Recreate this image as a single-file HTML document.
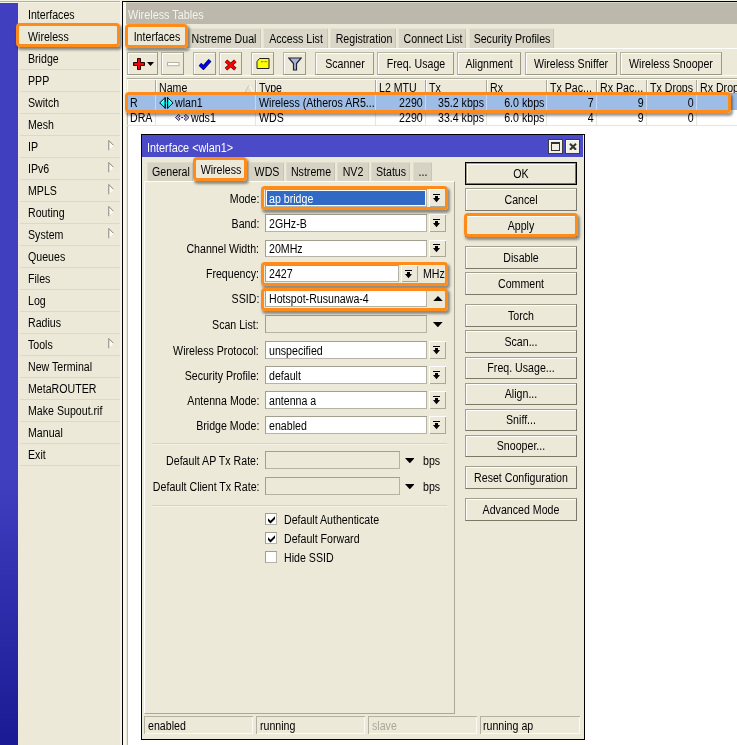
<!DOCTYPE html>
<html><head><meta charset="utf-8"><title>WinBox - Interface wlan1</title>
<style>
html,body{margin:0;padding:0;background:#fff;}
body{width:737px;height:745px;position:relative;overflow:hidden;font-family:"Liberation Sans",sans-serif;}
#root{position:absolute;left:0;top:0;width:737px;height:745px;overflow:hidden;will-change:transform}
#root div,#root svg,#root span{position:absolute;}
.t{white-space:nowrap;line-height:16px;height:16px;display:block}
.t.c{text-align:center}
</style></head><body><div id="root">
<div style="left:0px;top:0px;width:737px;height:745px;background:#ece9d8"></div>
<div style="left:0px;top:0px;width:737px;height:1px;background:#f3f1e2"></div>
<div style="left:0px;top:1px;width:122px;height:1px;background:#b3b0a2"></div>
<div style="left:0px;top:2px;width:122px;height:1px;background:#f5f3e4"></div>
<div style="left:0px;top:3px;width:18px;height:742px;background:linear-gradient(#3f3fc0 0,#3f3fc0 64%,#1a1a94 100%)"></div>
<span class="t" style="left:28px;top:7.0px;color:#000;font-size:12px;transform:scaleX(0.885);transform-origin:0 50%;">Interfaces</span>
<div style="left:20px;top:25px;width:100px;height:1.3px;background:#dcd9c8"></div>
<span class="t" style="left:28px;top:29.0px;color:#000;font-size:12px;transform:scaleX(0.885);transform-origin:0 50%;">Wireless</span>
<div style="left:20px;top:47px;width:100px;height:1.3px;background:#dcd9c8"></div>
<span class="t" style="left:28px;top:51.0px;color:#000;font-size:12px;transform:scaleX(0.885);transform-origin:0 50%;">Bridge</span>
<div style="left:20px;top:69px;width:100px;height:1.3px;background:#dcd9c8"></div>
<span class="t" style="left:28px;top:73.0px;color:#000;font-size:12px;transform:scaleX(0.885);transform-origin:0 50%;">PPP</span>
<div style="left:20px;top:91px;width:100px;height:1.3px;background:#dcd9c8"></div>
<span class="t" style="left:28px;top:95.0px;color:#000;font-size:12px;transform:scaleX(0.885);transform-origin:0 50%;">Switch</span>
<div style="left:20px;top:113px;width:100px;height:1.3px;background:#dcd9c8"></div>
<span class="t" style="left:28px;top:117.0px;color:#000;font-size:12px;transform:scaleX(0.885);transform-origin:0 50%;">Mesh</span>
<div style="left:20px;top:135px;width:100px;height:1.3px;background:#dcd9c8"></div>
<span class="t" style="left:28px;top:139.0px;color:#000;font-size:12px;transform:scaleX(0.885);transform-origin:0 50%;">IP</span>
<div style="left:20px;top:157px;width:100px;height:1.3px;background:#dcd9c8"></div>
<svg style="left:108px;top:140px" width="7" height="11" viewBox="0 0 7 11"><path d="M0.8 0.5 L5.6 5.4 L0.8 10.3 Z" fill="#fdfcf8"/><path d="M0.8 10.2 L0.8 0.5 L5.4 5.2" fill="none" stroke="#858377" stroke-width="1"/></svg>
<span class="t" style="left:28px;top:161.0px;color:#000;font-size:12px;transform:scaleX(0.885);transform-origin:0 50%;">IPv6</span>
<div style="left:20px;top:179px;width:100px;height:1.3px;background:#dcd9c8"></div>
<svg style="left:108px;top:162px" width="7" height="11" viewBox="0 0 7 11"><path d="M0.8 0.5 L5.6 5.4 L0.8 10.3 Z" fill="#fdfcf8"/><path d="M0.8 10.2 L0.8 0.5 L5.4 5.2" fill="none" stroke="#858377" stroke-width="1"/></svg>
<span class="t" style="left:28px;top:183.0px;color:#000;font-size:12px;transform:scaleX(0.885);transform-origin:0 50%;">MPLS</span>
<div style="left:20px;top:201px;width:100px;height:1.3px;background:#dcd9c8"></div>
<svg style="left:108px;top:184px" width="7" height="11" viewBox="0 0 7 11"><path d="M0.8 0.5 L5.6 5.4 L0.8 10.3 Z" fill="#fdfcf8"/><path d="M0.8 10.2 L0.8 0.5 L5.4 5.2" fill="none" stroke="#858377" stroke-width="1"/></svg>
<span class="t" style="left:28px;top:205.0px;color:#000;font-size:12px;transform:scaleX(0.885);transform-origin:0 50%;">Routing</span>
<div style="left:20px;top:223px;width:100px;height:1.3px;background:#dcd9c8"></div>
<svg style="left:108px;top:206px" width="7" height="11" viewBox="0 0 7 11"><path d="M0.8 0.5 L5.6 5.4 L0.8 10.3 Z" fill="#fdfcf8"/><path d="M0.8 10.2 L0.8 0.5 L5.4 5.2" fill="none" stroke="#858377" stroke-width="1"/></svg>
<span class="t" style="left:28px;top:227.0px;color:#000;font-size:12px;transform:scaleX(0.885);transform-origin:0 50%;">System</span>
<div style="left:20px;top:245px;width:100px;height:1.3px;background:#dcd9c8"></div>
<svg style="left:108px;top:228px" width="7" height="11" viewBox="0 0 7 11"><path d="M0.8 0.5 L5.6 5.4 L0.8 10.3 Z" fill="#fdfcf8"/><path d="M0.8 10.2 L0.8 0.5 L5.4 5.2" fill="none" stroke="#858377" stroke-width="1"/></svg>
<span class="t" style="left:28px;top:249.0px;color:#000;font-size:12px;transform:scaleX(0.885);transform-origin:0 50%;">Queues</span>
<div style="left:20px;top:267px;width:100px;height:1.3px;background:#dcd9c8"></div>
<span class="t" style="left:28px;top:271.0px;color:#000;font-size:12px;transform:scaleX(0.885);transform-origin:0 50%;">Files</span>
<div style="left:20px;top:289px;width:100px;height:1.3px;background:#dcd9c8"></div>
<span class="t" style="left:28px;top:293.0px;color:#000;font-size:12px;transform:scaleX(0.885);transform-origin:0 50%;">Log</span>
<div style="left:20px;top:311px;width:100px;height:1.3px;background:#dcd9c8"></div>
<span class="t" style="left:28px;top:315.0px;color:#000;font-size:12px;transform:scaleX(0.885);transform-origin:0 50%;">Radius</span>
<div style="left:20px;top:333px;width:100px;height:1.3px;background:#dcd9c8"></div>
<span class="t" style="left:28px;top:337.0px;color:#000;font-size:12px;transform:scaleX(0.885);transform-origin:0 50%;">Tools</span>
<div style="left:20px;top:355px;width:100px;height:1.3px;background:#dcd9c8"></div>
<svg style="left:108px;top:338px" width="7" height="11" viewBox="0 0 7 11"><path d="M0.8 0.5 L5.6 5.4 L0.8 10.3 Z" fill="#fdfcf8"/><path d="M0.8 10.2 L0.8 0.5 L5.4 5.2" fill="none" stroke="#858377" stroke-width="1"/></svg>
<span class="t" style="left:28px;top:359.0px;color:#000;font-size:12px;transform:scaleX(0.885);transform-origin:0 50%;">New Terminal</span>
<div style="left:20px;top:377px;width:100px;height:1.3px;background:#dcd9c8"></div>
<span class="t" style="left:28px;top:381.0px;color:#000;font-size:12px;transform:scaleX(0.885);transform-origin:0 50%;">MetaROUTER</span>
<div style="left:20px;top:399px;width:100px;height:1.3px;background:#dcd9c8"></div>
<span class="t" style="left:28px;top:403.0px;color:#000;font-size:12px;transform:scaleX(0.885);transform-origin:0 50%;">Make Supout.rif</span>
<div style="left:20px;top:421px;width:100px;height:1.3px;background:#dcd9c8"></div>
<span class="t" style="left:28px;top:425.0px;color:#000;font-size:12px;transform:scaleX(0.885);transform-origin:0 50%;">Manual</span>
<div style="left:20px;top:443px;width:100px;height:1.3px;background:#dcd9c8"></div>
<span class="t" style="left:28px;top:447.0px;color:#000;font-size:12px;transform:scaleX(0.885);transform-origin:0 50%;">Exit</span>
<div style="left:20px;top:465px;width:100px;height:1.3px;background:#dcd9c8"></div>
<div style="left:16px;top:23px;width:104px;height:24px;border:3px solid #ff8c1a;border-radius:4px;box-sizing:border-box;box-shadow:1.5px 2.5px 2.5px rgba(0,0,0,.4);z-index:5"></div>
<div style="left:120px;top:1px;width:2px;height:744px;background:#f4f2e7"></div>
<div style="left:122px;top:1px;width:615px;height:744px;background:#ece9d8;border-left:1px solid #000;border-top:1px solid #000;box-sizing:border-box"></div>
<div style="left:123px;top:2px;width:614px;height:21.6px;background:#bcb8ab"></div>
<div style="left:123px;top:2px;width:614px;height:1px;background:#d9d6c9"></div>
<div style="left:123px;top:2px;width:2.6px;height:743px;background:#f9f7ee;z-index:1"></div>
<span class="t" style="left:128px;top:7.0px;color:#f4f3ee;font-size:12.5px;transform:scaleX(0.866);transform-origin:0 50%;">Wireless Tables</span>
<div style="left:123px;top:48px;width:614px;height:1px;background:#ffffff"></div>
<div style="left:127px;top:27px;width:58px;height:22px;background:#ece9d8"></div>
<span class="t c" style="left:6.800000000000011px;width:300px;top:29.299999999999997px;color:#000;font-size:12px;transform:scaleX(0.885);transform-origin:50% 50%;">Interfaces</span>
<div style="left:186px;top:28px;width:75px;height:19.7px;background:#d9d6c7;box-shadow:inset 1px 1px 0 #e4e1d3, inset -1px 0 0 #c9c6b7"></div>
<span class="t c" style="left:74.1px;width:300px;top:31.0px;color:#000;font-size:12px;transform:scaleX(0.885);transform-origin:50% 50%;">Nstreme Dual</span>
<div style="left:263px;top:28px;width:64.60000000000002px;height:19.7px;background:#d9d6c7;box-shadow:inset 1px 1px 0 #e4e1d3, inset -1px 0 0 #c9c6b7"></div>
<span class="t c" style="left:145.90000000000003px;width:300px;top:31.0px;color:#000;font-size:12px;transform:scaleX(0.885);transform-origin:50% 50%;">Access List</span>
<div style="left:329.8px;top:28px;width:66.19999999999999px;height:19.7px;background:#d9d6c7;box-shadow:inset 1px 1px 0 #e4e1d3, inset -1px 0 0 #c9c6b7"></div>
<span class="t c" style="left:213.5px;width:300px;top:31.0px;color:#000;font-size:12px;transform:scaleX(0.885);transform-origin:50% 50%;">Registration</span>
<div style="left:398px;top:28px;width:68.30000000000001px;height:19.7px;background:#d9d6c7;box-shadow:inset 1px 1px 0 #e4e1d3, inset -1px 0 0 #c9c6b7"></div>
<span class="t c" style="left:282.75px;width:300px;top:31.0px;color:#000;font-size:12px;transform:scaleX(0.885);transform-origin:50% 50%;">Connect List</span>
<div style="left:468.6px;top:28px;width:85.10000000000002px;height:19.7px;background:#d9d6c7;box-shadow:inset 1px 1px 0 #e4e1d3, inset -1px 0 0 #c9c6b7"></div>
<span class="t c" style="left:361.75000000000006px;width:300px;top:31.0px;color:#000;font-size:12px;transform:scaleX(0.885);transform-origin:50% 50%;">Security Profiles</span>
<div style="left:125px;top:24px;width:62.5px;height:23.6px;border:3px solid #ff8c1a;border-radius:4px;box-sizing:border-box;box-shadow:1.5px 2.5px 2.5px rgba(0,0,0,.4);z-index:5"></div>
<div style="left:127.3px;top:52.3px;width:31px;height:22.3px;background:#ece9d8;border:1px solid;border-color:#b5b2a3 #9b988a #9b988a #b5b2a3;box-sizing:border-box;box-shadow:inset 1px 1px 0 #ffffff"></div>
<div style="left:161.3px;top:52.3px;width:23px;height:22.3px;background:#ece9d8;border:1px solid;border-color:#b5b2a3 #9b988a #9b988a #b5b2a3;box-sizing:border-box;box-shadow:inset 1px 1px 0 #ffffff"></div>
<div style="left:193.3px;top:52.3px;width:23px;height:22.3px;background:#ece9d8;border:1px solid;border-color:#b5b2a3 #9b988a #9b988a #b5b2a3;box-sizing:border-box;box-shadow:inset 1px 1px 0 #ffffff"></div>
<div style="left:219.3px;top:52.3px;width:23px;height:22.3px;background:#ece9d8;border:1px solid;border-color:#b5b2a3 #9b988a #9b988a #b5b2a3;box-sizing:border-box;box-shadow:inset 1px 1px 0 #ffffff"></div>
<div style="left:251.3px;top:52.3px;width:23px;height:22.3px;background:#ece9d8;border:1px solid;border-color:#b5b2a3 #9b988a #9b988a #b5b2a3;box-sizing:border-box;box-shadow:inset 1px 1px 0 #ffffff"></div>
<div style="left:283.3px;top:52.3px;width:23px;height:22.3px;background:#ece9d8;border:1px solid;border-color:#b5b2a3 #9b988a #9b988a #b5b2a3;box-sizing:border-box;box-shadow:inset 1px 1px 0 #ffffff"></div>
<div style="left:315px;top:52.3px;width:59px;height:22.3px;background:#ece9d8;border:1px solid;border-color:#b5b2a3 #9b988a #9b988a #b5b2a3;box-sizing:border-box;box-shadow:inset 1px 1px 0 #ffffff"></div>
<span class="t c" style="left:194.5px;width:300px;top:55.7px;color:#000;font-size:12px;transform:scaleX(0.885);transform-origin:50% 50%;">Scanner</span>
<div style="left:377px;top:52.3px;width:77px;height:22.3px;background:#ece9d8;border:1px solid;border-color:#b5b2a3 #9b988a #9b988a #b5b2a3;box-sizing:border-box;box-shadow:inset 1px 1px 0 #ffffff"></div>
<span class="t c" style="left:265.5px;width:300px;top:55.7px;color:#000;font-size:12px;transform:scaleX(0.885);transform-origin:50% 50%;">Freq. Usage</span>
<div style="left:457px;top:52.3px;width:64px;height:22.3px;background:#ece9d8;border:1px solid;border-color:#b5b2a3 #9b988a #9b988a #b5b2a3;box-sizing:border-box;box-shadow:inset 1px 1px 0 #ffffff"></div>
<span class="t c" style="left:339.0px;width:300px;top:55.7px;color:#000;font-size:12px;transform:scaleX(0.885);transform-origin:50% 50%;">Alignment</span>
<div style="left:525px;top:52.3px;width:92px;height:22.3px;background:#ece9d8;border:1px solid;border-color:#b5b2a3 #9b988a #9b988a #b5b2a3;box-sizing:border-box;box-shadow:inset 1px 1px 0 #ffffff"></div>
<span class="t c" style="left:421.0px;width:300px;top:55.7px;color:#000;font-size:12px;transform:scaleX(0.885);transform-origin:50% 50%;">Wireless Sniffer</span>
<div style="left:620px;top:52.3px;width:102px;height:22.3px;background:#ece9d8;border:1px solid;border-color:#b5b2a3 #9b988a #9b988a #b5b2a3;box-sizing:border-box;box-shadow:inset 1px 1px 0 #ffffff"></div>
<span class="t c" style="left:521.0px;width:300px;top:55.7px;color:#000;font-size:12px;transform:scaleX(0.885);transform-origin:50% 50%;">Wireless Snooper</span>
<svg style="left:133px;top:58px" width="22" height="13" viewBox="0 0 22 13"><path d="M4.5 0.5h3v4h4v3h-4v4h-3v-4h-4v-3h4z" fill="#f00" stroke="#200" stroke-width="1"/><path d="M14 4h7l-3.5 4z" fill="#000"/></svg>
<svg style="left:167px;top:62px" width="13" height="5" viewBox="0 0 13 5"><rect x="0.5" y="0.5" width="11.5" height="3.2" fill="#fff" stroke="#b5b2a2"/></svg>
<svg style="left:198px;top:58px" width="14" height="12" viewBox="0 0 14 12"><path d="M2 6.3 L5.4 9.6 L12 2.3" fill="none" stroke="#003" stroke-width="3.8"/><path d="M2 6.3 L5.4 9.6 L12 2.3" fill="none" stroke="#00f" stroke-width="2.6"/></svg>
<svg style="left:224px;top:58.5px" width="13" height="12" viewBox="0 0 13 12"><path d="M2 1.8 L11.3 10.2 M11.3 1.8 L2 10.2" fill="none" stroke="#500" stroke-width="3.6"/><path d="M2 1.8 L11.3 10.2 M11.3 1.8 L2 10.2" fill="none" stroke="#f00" stroke-width="2.4"/></svg>
<svg style="left:256px;top:58px" width="14" height="12" viewBox="0 0 14 12"><path d="M3.5 0.5h9.5v10h-12v-7z" fill="#ff0" stroke="#222" stroke-width="1"/><path d="M5 3.6h7" stroke="#8a8a70" stroke-width="1.1" stroke-dasharray="2.4 1"/></svg>
<svg style="left:288px;top:57px" width="14" height="14" viewBox="0 0 14 14"><path d="M0.8 1h12.4l-4.7 5.5v6.5h-3v-6.5z" fill="#a8b4d8" stroke="#223" stroke-width="1.2"/></svg>
<div style="left:127px;top:78px;width:610px;height:667px;background:#fff;border-left:1px solid #b9b6a7;box-sizing:border-box"></div>
<div style="left:127px;top:78px;width:610px;height:1px;background:#b0ad9e"></div>
<div style="left:125.6px;top:75px;width:612px;height:1px;background:#fdfcf7"></div>
<div style="left:127px;top:79px;width:29px;height:15px;background:#ece9d8;box-shadow:inset 1px 1px 0 #ffffff, inset -1px 0 0 #aca899;"></div>
<div style="left:156px;top:79px;width:100px;height:15px;background:#ece9d8;box-shadow:inset 1px 1px 0 #ffffff, inset -1px 0 0 #aca899;"></div>
<span class="t" style="left:159px;top:79.6px;color:#000;font-size:12px;transform:scaleX(0.885);transform-origin:0 50%;">Name</span>
<div style="left:256px;top:79px;width:120px;height:15px;background:#ece9d8;box-shadow:inset 1px 1px 0 #ffffff, inset -1px 0 0 #aca899;"></div>
<span class="t" style="left:259px;top:79.6px;color:#000;font-size:12px;transform:scaleX(0.885);transform-origin:0 50%;">Type</span>
<div style="left:376px;top:79px;width:50px;height:15px;background:#ece9d8;box-shadow:inset 1px 1px 0 #ffffff, inset -1px 0 0 #aca899;"></div>
<span class="t" style="left:379px;top:79.6px;color:#000;font-size:12px;transform:scaleX(0.885);transform-origin:0 50%;">L2 MTU</span>
<div style="left:426px;top:79px;width:61px;height:15px;background:#ece9d8;box-shadow:inset 1px 1px 0 #ffffff, inset -1px 0 0 #aca899;"></div>
<span class="t" style="left:429px;top:79.6px;color:#000;font-size:12px;transform:scaleX(0.885);transform-origin:0 50%;">Tx</span>
<div style="left:487px;top:79px;width:60px;height:15px;background:#ece9d8;box-shadow:inset 1px 1px 0 #ffffff, inset -1px 0 0 #aca899;"></div>
<span class="t" style="left:490px;top:79.6px;color:#000;font-size:12px;transform:scaleX(0.885);transform-origin:0 50%;">Rx</span>
<div style="left:547px;top:79px;width:50px;height:15px;background:#ece9d8;box-shadow:inset 1px 1px 0 #ffffff, inset -1px 0 0 #aca899;"></div>
<span class="t" style="left:550px;top:79.6px;color:#000;font-size:12px;transform:scaleX(0.885);transform-origin:0 50%;">Tx Pac...</span>
<div style="left:597px;top:79px;width:50px;height:15px;background:#ece9d8;box-shadow:inset 1px 1px 0 #ffffff, inset -1px 0 0 #aca899;"></div>
<span class="t" style="left:600px;top:79.6px;color:#000;font-size:12px;transform:scaleX(0.885);transform-origin:0 50%;">Rx Pac...</span>
<div style="left:647px;top:79px;width:50px;height:15px;background:#ece9d8;box-shadow:inset 1px 1px 0 #ffffff, inset -1px 0 0 #aca899;"></div>
<span class="t" style="left:650px;top:79.6px;color:#000;font-size:12px;transform:scaleX(0.885);transform-origin:0 50%;">Tx Drops</span>
<div style="left:697px;top:79px;width:43px;height:15px;background:#ece9d8;box-shadow:inset 1px 1px 0 #ffffff, inset -1px 0 0 #aca899;"></div>
<span class="t" style="left:700px;top:79.6px;color:#000;font-size:12px;transform:scaleX(0.885);transform-origin:0 50%;">Rx Drop</span>
<div style="left:127px;top:93px;width:610px;height:1px;background:#aca899"></div>
<svg style="left:244px;top:84px" width="10" height="9" viewBox="0 0 10 9"><path d="M5 1 L1 8.5 L9 8.5 Z" fill="#e4e1d2" stroke="#fff" stroke-width="1"/><path d="M5 1 L1 8.5" stroke="#c0bdae" stroke-width="1"/></svg>
<div style="left:127px;top:94px;width:610px;height:16px;background:#9ebde6"></div>
<div style="left:155px;top:94px;width:1px;height:16px;background:#c4d6f0"></div>
<div style="left:155px;top:110px;width:1px;height:15px;background:#e8e6da"></div>
<div style="left:255px;top:94px;width:1px;height:16px;background:#c4d6f0"></div>
<div style="left:255px;top:110px;width:1px;height:15px;background:#e8e6da"></div>
<div style="left:375px;top:94px;width:1px;height:16px;background:#c4d6f0"></div>
<div style="left:375px;top:110px;width:1px;height:15px;background:#e8e6da"></div>
<div style="left:425px;top:94px;width:1px;height:16px;background:#c4d6f0"></div>
<div style="left:425px;top:110px;width:1px;height:15px;background:#e8e6da"></div>
<div style="left:486px;top:94px;width:1px;height:16px;background:#c4d6f0"></div>
<div style="left:486px;top:110px;width:1px;height:15px;background:#e8e6da"></div>
<div style="left:546px;top:94px;width:1px;height:16px;background:#c4d6f0"></div>
<div style="left:546px;top:110px;width:1px;height:15px;background:#e8e6da"></div>
<div style="left:596px;top:94px;width:1px;height:16px;background:#c4d6f0"></div>
<div style="left:596px;top:110px;width:1px;height:15px;background:#e8e6da"></div>
<div style="left:646px;top:94px;width:1px;height:16px;background:#c4d6f0"></div>
<div style="left:646px;top:110px;width:1px;height:15px;background:#e8e6da"></div>
<div style="left:696px;top:94px;width:1px;height:16px;background:#c4d6f0"></div>
<div style="left:696px;top:110px;width:1px;height:15px;background:#e8e6da"></div>
<div style="left:127px;top:125px;width:610px;height:1px;background:#e8e6da"></div>
<span class="t" style="left:130px;top:95.0px;color:#000;font-size:12px;transform:scaleX(0.885);transform-origin:0 50%;">R</span>
<span class="t" style="left:175px;top:95.0px;color:#000;font-size:12px;transform:scaleX(0.885);transform-origin:0 50%;">wlan1</span>
<span class="t" style="left:259px;top:95.0px;color:#000;font-size:12px;transform:scaleX(0.885);transform-origin:0 50%;">Wireless (Atheros AR5...</span>
<span class="t" style="right:314px;top:95.0px;color:#000;font-size:12px;transform:scaleX(0.885);transform-origin:100% 50%;">2290</span>
<span class="t" style="right:253px;top:95.0px;color:#000;font-size:12px;transform:scaleX(0.885);transform-origin:100% 50%;">35.2 kbps</span>
<span class="t" style="right:193px;top:95.0px;color:#000;font-size:12px;transform:scaleX(0.885);transform-origin:100% 50%;">6.0 kbps</span>
<span class="t" style="right:143px;top:95.0px;color:#000;font-size:12px;transform:scaleX(0.885);transform-origin:100% 50%;">7</span>
<span class="t" style="right:93px;top:95.0px;color:#000;font-size:12px;transform:scaleX(0.885);transform-origin:100% 50%;">9</span>
<span class="t" style="right:43px;top:95.0px;color:#000;font-size:12px;transform:scaleX(0.885);transform-origin:100% 50%;">0</span>
<span class="t" style="left:130px;top:109.5px;color:#000;font-size:12px;transform:scaleX(0.885);transform-origin:0 50%;">DRA</span>
<span class="t" style="left:191px;top:109.5px;color:#000;font-size:12px;transform:scaleX(0.885);transform-origin:0 50%;">wds1</span>
<span class="t" style="left:259px;top:109.5px;color:#000;font-size:12px;transform:scaleX(0.885);transform-origin:0 50%;">WDS</span>
<span class="t" style="right:314px;top:109.5px;color:#000;font-size:12px;transform:scaleX(0.885);transform-origin:100% 50%;">2290</span>
<span class="t" style="right:253px;top:109.5px;color:#000;font-size:12px;transform:scaleX(0.885);transform-origin:100% 50%;">33.4 kbps</span>
<span class="t" style="right:193px;top:109.5px;color:#000;font-size:12px;transform:scaleX(0.885);transform-origin:100% 50%;">6.0 kbps</span>
<span class="t" style="right:143px;top:109.5px;color:#000;font-size:12px;transform:scaleX(0.885);transform-origin:100% 50%;">4</span>
<span class="t" style="right:93px;top:109.5px;color:#000;font-size:12px;transform:scaleX(0.885);transform-origin:100% 50%;">9</span>
<span class="t" style="right:43px;top:109.5px;color:#000;font-size:12px;transform:scaleX(0.885);transform-origin:100% 50%;">0</span>
<svg style="left:158.5px;top:96.6px" width="15" height="12" viewBox="0 0 15 12"><rect x="3" y="4.8" width="9" height="2.3" fill="#0ff"/><path d="M0.7 5.9 L6.2 0.6 L6.2 11.2 Z M14.1 5.9 L8.6 0.6 L8.6 11.2 Z" fill="#2ff" stroke="#011" stroke-width="1" stroke-linejoin="miter"/><rect x="4" y="4.9" width="7" height="2" fill="#0ff"/><path d="M6.2 0.3v11.3M8.6 0.3v11.3" stroke="#011" stroke-width="1"/><path d="M2.6 5.4 L5 3.2 M12.2 5.4 L9.8 3.2" stroke="#dff" stroke-width=".8"/></svg>
<svg style="left:175px;top:114px" width="15" height="8" viewBox="0 0 15 8"><path d="M0.4 3.5 L3.6 0.4 L5.2 1.9 L3.6 3.5 L5.2 5.1 L3.6 6.6 Z M14 3.5 L10.8 0.4 L9.2 1.9 L10.8 3.5 L9.2 5.1 L10.8 6.6 Z" fill="#c0b0ff" stroke="#223" stroke-width=".9"/><path d="M6.2 3.5h2" stroke="#223" stroke-width="1.2"/></svg>
<div style="left:125px;top:92px;width:606px;height:21px;border:3px solid #ff8c1a;border-radius:4px;box-sizing:border-box;box-shadow:1.5px 2.5px 2.5px rgba(0,0,0,.4);z-index:5"></div>
<div style="left:141px;top:134px;width:444px;height:606.4px;background:#ece9d8;border:1px solid #000;border-bottom-width:1.5px;box-sizing:border-box"></div>
<div style="left:142px;top:135px;width:441px;height:21.7px;background:#4b4bc8"></div>
<span class="t" style="left:147px;top:140.0px;color:#fff;font-size:12.5px;transform:scaleX(0.866);transform-origin:0 50%;">Interface &lt;wlan1&gt;</span>
<div style="left:548.2px;top:139.2px;width:14.6px;height:14.6px;background:#f3f0e4;border:1px solid #3c3c3c;box-sizing:border-box;box-shadow:inset 1px 1px 0 #fff"></div>
<div style="left:565.2px;top:139.2px;width:14.6px;height:14.6px;background:#f3f0e4;border:1px solid #3c3c3c;box-sizing:border-box;box-shadow:inset 1px 1px 0 #fff"></div>
<div style="left:551.2px;top:142.2px;width:8.8px;height:8.6px;border:1px solid #333;border-top-width:2px;box-sizing:border-box"></div>
<svg style="left:568.5px;top:142.7px" width="8" height="7.6" viewBox="0 0 8 7.6"><path d="M1 0.8 L7 6.8 M7 0.8 L1 6.8" stroke="#333" stroke-width="2"/></svg>
<div style="left:144px;top:181px;width:311px;height:533px;background:#ece9d8;border-top:1px solid #ffffff;border-left:1px solid #ffffff;border-right:1px solid #aca899;border-bottom:1px solid #aca899;box-sizing:border-box"></div>
<div style="left:146.8px;top:162.2px;width:46.19999999999999px;height:18.8px;background:#d6d3c4;box-shadow:inset 1px 1px 0 #dfdccd, inset -1px 0 0 #c8c5b6"></div>
<span class="t c" style="left:21.099999999999994px;width:300px;top:163.7px;color:#000;font-size:12px;transform:scaleX(0.885);transform-origin:50% 50%;">General</span>
<div style="left:194px;top:159px;width:53px;height:23px;background:#ece9d8"></div>
<span class="t c" style="left:70.5px;width:300px;top:162.0px;color:#000;font-size:12px;transform:scaleX(0.885);transform-origin:50% 50%;">Wireless</span>
<div style="left:249.5px;top:162.2px;width:34.0px;height:18.8px;background:#d6d3c4;box-shadow:inset 1px 1px 0 #dfdccd, inset -1px 0 0 #c8c5b6"></div>
<span class="t c" style="left:116.80000000000001px;width:300px;top:163.7px;color:#000;font-size:12px;transform:scaleX(0.885);transform-origin:50% 50%;">WDS</span>
<div style="left:286px;top:162.2px;width:49px;height:18.8px;background:#d6d3c4;box-shadow:inset 1px 1px 0 #dfdccd, inset -1px 0 0 #c8c5b6"></div>
<span class="t c" style="left:160.8px;width:300px;top:163.7px;color:#000;font-size:12px;transform:scaleX(0.885);transform-origin:50% 50%;">Nstreme</span>
<div style="left:337.2px;top:162.2px;width:31.80000000000001px;height:18.8px;background:#d6d3c4;box-shadow:inset 1px 1px 0 #dfdccd, inset -1px 0 0 #c8c5b6"></div>
<span class="t c" style="left:203.40000000000003px;width:300px;top:163.7px;color:#000;font-size:12px;transform:scaleX(0.885);transform-origin:50% 50%;">NV2</span>
<div style="left:370.8px;top:162.2px;width:39.599999999999966px;height:18.8px;background:#d6d3c4;box-shadow:inset 1px 1px 0 #dfdccd, inset -1px 0 0 #c8c5b6"></div>
<span class="t c" style="left:240.90000000000003px;width:300px;top:163.7px;color:#000;font-size:12px;transform:scaleX(0.885);transform-origin:50% 50%;">Status</span>
<div style="left:412.6px;top:162.2px;width:19.5px;height:18.8px;background:#d6d3c4;box-shadow:inset 1px 1px 0 #dfdccd, inset -1px 0 0 #c8c5b6"></div>
<span class="t c" style="left:272.65000000000003px;width:300px;top:163.7px;color:#000;font-size:12px;transform:scaleX(0.885);transform-origin:50% 50%;">...</span>
<div style="left:193.2px;top:157px;width:54.2px;height:24px;border:3px solid #ff8c1a;border-radius:4px;box-sizing:border-box;box-shadow:1.5px 2.5px 2.5px rgba(0,0,0,.4);z-index:5"></div>
<span class="t" style="right:478px;top:190.8px;color:#000;font-size:12px;transform:scaleX(0.885);transform-origin:100% 50%;">Mode:</span>
<div style="left:265px;top:189.25px;width:162px;height:17.5px;background:#ffffff;box-shadow:inset 1px 1px 0 #a29f91, inset -1px -1px 0 #b6b3a4;"></div>
<div style="left:267px;top:191.25px;width:158px;height:13.5px;background:#316ac5"></div>
<span class="t" style="left:268.7px;top:190.6px;color:#fff;font-size:12px;transform:scaleX(0.885);transform-origin:0 50%;">ap bridge</span>
<div style="left:428.5px;top:189.25px;width:17.3px;height:17.5px;background:#ece9d8;box-shadow:inset 1px 1px 0 #ffffff, inset -1px -1px 0 #aca899;"></div>
<svg style="left:433.0px;top:194.05px" width="7" height="9" viewBox="0 0 7 9"><rect x="0" y="0" width="7" height="1" fill="#000"/><rect x="2" y="2" width="3" height="2.5" fill="#000"/><path d="M0 4h7l-3.5 4.2z" fill="#000"/></svg>
<span class="t" style="right:478px;top:215.8px;color:#000;font-size:12px;transform:scaleX(0.885);transform-origin:100% 50%;">Band:</span>
<div style="left:265px;top:214.25px;width:162px;height:17.5px;background:#ffffff;box-shadow:inset 1px 1px 0 #a29f91, inset -1px -1px 0 #b6b3a4;"></div>
<span class="t" style="left:268.7px;top:215.6px;color:#000;font-size:12px;transform:scaleX(0.885);transform-origin:0 50%;">2GHz-B</span>
<div style="left:428.5px;top:214.25px;width:17.3px;height:17.5px;background:#ece9d8;box-shadow:inset 1px 1px 0 #ffffff, inset -1px -1px 0 #aca899;"></div>
<svg style="left:433.0px;top:219.05px" width="7" height="9" viewBox="0 0 7 9"><rect x="0" y="0" width="7" height="1" fill="#000"/><rect x="2" y="2" width="3" height="2.5" fill="#000"/><path d="M0 4h7l-3.5 4.2z" fill="#000"/></svg>
<span class="t" style="right:478px;top:241.10000000000002px;color:#000;font-size:12px;transform:scaleX(0.885);transform-origin:100% 50%;">Channel Width:</span>
<div style="left:265px;top:239.55px;width:162px;height:17.5px;background:#ffffff;box-shadow:inset 1px 1px 0 #a29f91, inset -1px -1px 0 #b6b3a4;"></div>
<span class="t" style="left:268.7px;top:240.9px;color:#000;font-size:12px;transform:scaleX(0.885);transform-origin:0 50%;">20MHz</span>
<div style="left:428.5px;top:239.55px;width:17.3px;height:17.5px;background:#ece9d8;box-shadow:inset 1px 1px 0 #ffffff, inset -1px -1px 0 #aca899;"></div>
<svg style="left:433.0px;top:244.35000000000002px" width="7" height="9" viewBox="0 0 7 9"><rect x="0" y="0" width="7" height="1" fill="#000"/><rect x="2" y="2" width="3" height="2.5" fill="#000"/><path d="M0 4h7l-3.5 4.2z" fill="#000"/></svg>
<span class="t" style="right:478px;top:266.3px;color:#000;font-size:12px;transform:scaleX(0.885);transform-origin:100% 50%;">Frequency:</span>
<div style="left:265px;top:264.75px;width:134px;height:17.5px;background:#ffffff;box-shadow:inset 1px 1px 0 #a29f91, inset -1px -1px 0 #b6b3a4;"></div>
<span class="t" style="left:268.7px;top:266.1px;color:#000;font-size:12px;transform:scaleX(0.885);transform-origin:0 50%;">2427</span>
<div style="left:400.5px;top:264.75px;width:17.3px;height:17.5px;background:#ece9d8;box-shadow:inset 1px 1px 0 #ffffff, inset -1px -1px 0 #aca899;"></div>
<svg style="left:405.0px;top:269.55px" width="7" height="9" viewBox="0 0 7 9"><rect x="0" y="0" width="7" height="1" fill="#000"/><rect x="2" y="2" width="3" height="2.5" fill="#000"/><path d="M0 4h7l-3.5 4.2z" fill="#000"/></svg>
<span class="t" style="left:422.5px;top:266.1px;color:#000;font-size:12px;transform:scaleX(0.885);transform-origin:0 50%;">MHz</span>
<span class="t" style="right:478px;top:291.3px;color:#000;font-size:12px;transform:scaleX(0.885);transform-origin:100% 50%;">SSID:</span>
<div style="left:265px;top:289.75px;width:162px;height:17.5px;background:#ffffff;box-shadow:inset 1px 1px 0 #a29f91, inset -1px -1px 0 #b6b3a4;"></div>
<span class="t" style="left:268.7px;top:291.1px;color:#000;font-size:12px;transform:scaleX(0.885);transform-origin:0 50%;">Hotspot-Rusunawa-4</span>
<svg style="left:432.5px;top:296.0px" width="10" height="5.3" viewBox="0 0 10 5.3"><path d="M0 5.3h10l-5-5.3z" fill="#000"/></svg>
<span class="t" style="right:478px;top:316.8px;color:#000;font-size:12px;transform:scaleX(0.885);transform-origin:100% 50%;">Scan List:</span>
<div style="left:265px;top:315.25px;width:162px;height:17.5px;background:#ece9d8;box-shadow:inset 1px 1px 0 #a29f91, inset -1px -1px 0 #b6b3a4;"></div>
<svg style="left:433px;top:322px" width="9.6" height="5.3" viewBox="0 0 9.6 5.3"><path d="M0 0h9.6l-4.8 5.3z" fill="#000"/></svg>
<span class="t" style="right:478px;top:342.8px;color:#000;font-size:12px;transform:scaleX(0.885);transform-origin:100% 50%;">Wireless Protocol:</span>
<div style="left:265px;top:341.25px;width:162px;height:17.5px;background:#ffffff;box-shadow:inset 1px 1px 0 #a29f91, inset -1px -1px 0 #b6b3a4;"></div>
<span class="t" style="left:268.7px;top:342.6px;color:#000;font-size:12px;transform:scaleX(0.885);transform-origin:0 50%;">unspecified</span>
<div style="left:428.5px;top:341.25px;width:17.3px;height:17.5px;background:#ece9d8;box-shadow:inset 1px 1px 0 #ffffff, inset -1px -1px 0 #aca899;"></div>
<svg style="left:433.0px;top:346.05px" width="7" height="9" viewBox="0 0 7 9"><rect x="0" y="0" width="7" height="1" fill="#000"/><rect x="2" y="2" width="3" height="2.5" fill="#000"/><path d="M0 4h7l-3.5 4.2z" fill="#000"/></svg>
<span class="t" style="right:478px;top:367.8px;color:#000;font-size:12px;transform:scaleX(0.885);transform-origin:100% 50%;">Security Profile:</span>
<div style="left:265px;top:366.25px;width:162px;height:17.5px;background:#ffffff;box-shadow:inset 1px 1px 0 #a29f91, inset -1px -1px 0 #b6b3a4;"></div>
<span class="t" style="left:268.7px;top:367.6px;color:#000;font-size:12px;transform:scaleX(0.885);transform-origin:0 50%;">default</span>
<div style="left:428.5px;top:366.25px;width:17.3px;height:17.5px;background:#ece9d8;box-shadow:inset 1px 1px 0 #ffffff, inset -1px -1px 0 #aca899;"></div>
<svg style="left:433.0px;top:371.05px" width="7" height="9" viewBox="0 0 7 9"><rect x="0" y="0" width="7" height="1" fill="#000"/><rect x="2" y="2" width="3" height="2.5" fill="#000"/><path d="M0 4h7l-3.5 4.2z" fill="#000"/></svg>
<span class="t" style="right:478px;top:392.8px;color:#000;font-size:12px;transform:scaleX(0.885);transform-origin:100% 50%;">Antenna Mode:</span>
<div style="left:265px;top:391.25px;width:162px;height:17.5px;background:#ffffff;box-shadow:inset 1px 1px 0 #a29f91, inset -1px -1px 0 #b6b3a4;"></div>
<span class="t" style="left:268.7px;top:392.6px;color:#000;font-size:12px;transform:scaleX(0.885);transform-origin:0 50%;">antenna a</span>
<div style="left:428.5px;top:391.25px;width:17.3px;height:17.5px;background:#ece9d8;box-shadow:inset 1px 1px 0 #ffffff, inset -1px -1px 0 #aca899;"></div>
<svg style="left:433.0px;top:396.05px" width="7" height="9" viewBox="0 0 7 9"><rect x="0" y="0" width="7" height="1" fill="#000"/><rect x="2" y="2" width="3" height="2.5" fill="#000"/><path d="M0 4h7l-3.5 4.2z" fill="#000"/></svg>
<span class="t" style="right:478px;top:417.8px;color:#000;font-size:12px;transform:scaleX(0.885);transform-origin:100% 50%;">Bridge Mode:</span>
<div style="left:265px;top:416.25px;width:162px;height:17.5px;background:#ffffff;box-shadow:inset 1px 1px 0 #a29f91, inset -1px -1px 0 #b6b3a4;"></div>
<span class="t" style="left:268.7px;top:417.6px;color:#000;font-size:12px;transform:scaleX(0.885);transform-origin:0 50%;">enabled</span>
<div style="left:428.5px;top:416.25px;width:17.3px;height:17.5px;background:#ece9d8;box-shadow:inset 1px 1px 0 #ffffff, inset -1px -1px 0 #aca899;"></div>
<svg style="left:433.0px;top:421.05px" width="7" height="9" viewBox="0 0 7 9"><rect x="0" y="0" width="7" height="1" fill="#000"/><rect x="2" y="2" width="3" height="2.5" fill="#000"/><path d="M0 4h7l-3.5 4.2z" fill="#000"/></svg>
<span class="t" style="right:478px;top:452.8px;color:#000;font-size:12px;transform:scaleX(0.885);transform-origin:100% 50%;">Default AP Tx Rate:</span>
<div style="left:265px;top:450.95px;width:135px;height:18px;background:#ece9d8;box-shadow:inset 1px 1px 0 #a29f91, inset -1px -1px 0 #b6b3a4;"></div>
<svg style="left:404.5px;top:457.8px" width="9.6" height="5.3" viewBox="0 0 9.6 5.3"><path d="M0 0h9.6l-4.8 5.3z" fill="#000"/></svg>
<span class="t" style="left:422.5px;top:452.6px;color:#000;font-size:12px;transform:scaleX(0.885);transform-origin:0 50%;">bps</span>
<span class="t" style="right:478px;top:478.8px;color:#000;font-size:12px;transform:scaleX(0.885);transform-origin:100% 50%;">Default Client Tx Rate:</span>
<div style="left:265px;top:476.95px;width:135px;height:18px;background:#ece9d8;box-shadow:inset 1px 1px 0 #a29f91, inset -1px -1px 0 #b6b3a4;"></div>
<svg style="left:404.5px;top:483.8px" width="9.6" height="5.3" viewBox="0 0 9.6 5.3"><path d="M0 0h9.6l-4.8 5.3z" fill="#000"/></svg>
<span class="t" style="left:422.5px;top:478.6px;color:#000;font-size:12px;transform:scaleX(0.885);transform-origin:0 50%;">bps</span>
<div style="left:152px;top:443px;width:295px;height:1px;background:#d6d3c4"></div>
<div style="left:152px;top:444px;width:295px;height:1px;background:#f4f2e8"></div>
<div style="left:152px;top:505px;width:295px;height:1px;background:#d6d3c4"></div>
<div style="left:152px;top:506px;width:295px;height:1px;background:#f4f2e8"></div>
<div style="left:265px;top:513px;width:12.3px;height:12.3px;background:#ffffff;box-shadow:inset 1px 1px 0 #a29f91, inset -1px -1px 0 #b6b3a4;"></div>
<svg style="left:267.2px;top:514.7px" width="9" height="9" viewBox="0 0 9 9"><path d="M1 3.2 L3.5 5.7 L8 1.2 L8 4 L3.5 8.5 L1 6 Z" fill="#000"/></svg>
<span class="t" style="left:283.5px;top:511.70000000000005px;color:#000;font-size:12px;transform:scaleX(0.885);transform-origin:0 50%;">Default Authenticate</span>
<div style="left:265px;top:532px;width:12.3px;height:12.3px;background:#ffffff;box-shadow:inset 1px 1px 0 #a29f91, inset -1px -1px 0 #b6b3a4;"></div>
<svg style="left:267.2px;top:533.7px" width="9" height="9" viewBox="0 0 9 9"><path d="M1 3.2 L3.5 5.7 L8 1.2 L8 4 L3.5 8.5 L1 6 Z" fill="#000"/></svg>
<span class="t" style="left:283.5px;top:530.7px;color:#000;font-size:12px;transform:scaleX(0.885);transform-origin:0 50%;">Default Forward</span>
<div style="left:265px;top:551px;width:12.3px;height:12.3px;background:#ffffff;box-shadow:inset 1px 1px 0 #a29f91, inset -1px -1px 0 #b6b3a4;"></div>
<span class="t" style="left:283.5px;top:549.7px;color:#000;font-size:12px;transform:scaleX(0.885);transform-origin:0 50%;">Hide SSID</span>
<div style="left:261px;top:186px;width:187px;height:24px;border:3px solid #ff8c1a;border-radius:4px;box-sizing:border-box;box-shadow:1.5px 2.5px 2.5px rgba(0,0,0,.4);z-index:5"></div>
<div style="left:261px;top:262px;width:187px;height:23.5px;border:3px solid #ff8c1a;border-radius:4px;box-sizing:border-box;box-shadow:1.5px 2.5px 2.5px rgba(0,0,0,.4);z-index:5"></div>
<div style="left:261px;top:287.5px;width:187px;height:23px;border:3px solid #ff8c1a;border-radius:4px;box-sizing:border-box;box-shadow:1.5px 2.5px 2.5px rgba(0,0,0,.4);z-index:5"></div>
<div style="left:465px;top:162.2px;width:112.2px;height:22.6px;border:1px solid #000;box-sizing:border-box"></div>
<div style="left:466px;top:163.2px;width:110.2px;height:20.6px;background:#ece9d8;border:1px solid;border-color:#a19e8e #7a7869 #7a7869 #a19e8e;box-sizing:border-box;box-shadow:inset 1px 1px 0 #ffffff"></div>
<span class="t c" style="left:371px;width:300px;top:165.89999999999998px;color:#000;font-size:12px;transform:scaleX(0.885);transform-origin:50% 50%;">OK</span>
<div style="left:465px;top:188.4px;width:112.2px;height:22.6px;background:#ece9d8;border:1px solid;border-color:#a19e8e #7a7869 #7a7869 #a19e8e;box-sizing:border-box;box-shadow:inset 1px 1px 0 #ffffff"></div>
<span class="t c" style="left:371px;width:300px;top:192.1px;color:#000;font-size:12px;transform:scaleX(0.885);transform-origin:50% 50%;">Cancel</span>
<div style="left:465px;top:214.6px;width:112.2px;height:22.6px;background:#ece9d8;border:1px solid;border-color:#a19e8e #7a7869 #7a7869 #a19e8e;box-sizing:border-box;box-shadow:inset 1px 1px 0 #ffffff"></div>
<span class="t c" style="left:371px;width:300px;top:218.29999999999998px;color:#000;font-size:12px;transform:scaleX(0.885);transform-origin:50% 50%;">Apply</span>
<div style="left:465px;top:246.1px;width:112.2px;height:22.6px;background:#ece9d8;border:1px solid;border-color:#a19e8e #7a7869 #7a7869 #a19e8e;box-sizing:border-box;box-shadow:inset 1px 1px 0 #ffffff"></div>
<span class="t c" style="left:371px;width:300px;top:249.8px;color:#000;font-size:12px;transform:scaleX(0.885);transform-origin:50% 50%;">Disable</span>
<div style="left:465px;top:272.3px;width:112.2px;height:22.6px;background:#ece9d8;border:1px solid;border-color:#a19e8e #7a7869 #7a7869 #a19e8e;box-sizing:border-box;box-shadow:inset 1px 1px 0 #ffffff"></div>
<span class="t c" style="left:371px;width:300px;top:276.0px;color:#000;font-size:12px;transform:scaleX(0.885);transform-origin:50% 50%;">Comment</span>
<div style="left:465px;top:304px;width:112.2px;height:22.6px;background:#ece9d8;border:1px solid;border-color:#a19e8e #7a7869 #7a7869 #a19e8e;box-sizing:border-box;box-shadow:inset 1px 1px 0 #ffffff"></div>
<span class="t c" style="left:371px;width:300px;top:307.7px;color:#000;font-size:12px;transform:scaleX(0.885);transform-origin:50% 50%;">Torch</span>
<div style="left:465px;top:330.3px;width:112.2px;height:22.6px;background:#ece9d8;border:1px solid;border-color:#a19e8e #7a7869 #7a7869 #a19e8e;box-sizing:border-box;box-shadow:inset 1px 1px 0 #ffffff"></div>
<span class="t c" style="left:371px;width:300px;top:334.0px;color:#000;font-size:12px;transform:scaleX(0.885);transform-origin:50% 50%;">Scan...</span>
<div style="left:465px;top:356.6px;width:112.2px;height:22.6px;background:#ece9d8;border:1px solid;border-color:#a19e8e #7a7869 #7a7869 #a19e8e;box-sizing:border-box;box-shadow:inset 1px 1px 0 #ffffff"></div>
<span class="t c" style="left:371px;width:300px;top:360.3px;color:#000;font-size:12px;transform:scaleX(0.885);transform-origin:50% 50%;">Freq. Usage...</span>
<div style="left:465px;top:382.6px;width:112.2px;height:22.6px;background:#ece9d8;border:1px solid;border-color:#a19e8e #7a7869 #7a7869 #a19e8e;box-sizing:border-box;box-shadow:inset 1px 1px 0 #ffffff"></div>
<span class="t c" style="left:371px;width:300px;top:386.3px;color:#000;font-size:12px;transform:scaleX(0.885);transform-origin:50% 50%;">Align...</span>
<div style="left:465px;top:408.5px;width:112.2px;height:22.6px;background:#ece9d8;border:1px solid;border-color:#a19e8e #7a7869 #7a7869 #a19e8e;box-sizing:border-box;box-shadow:inset 1px 1px 0 #ffffff"></div>
<span class="t c" style="left:371px;width:300px;top:412.2px;color:#000;font-size:12px;transform:scaleX(0.885);transform-origin:50% 50%;">Sniff...</span>
<div style="left:465px;top:434.7px;width:112.2px;height:22.6px;background:#ece9d8;border:1px solid;border-color:#a19e8e #7a7869 #7a7869 #a19e8e;box-sizing:border-box;box-shadow:inset 1px 1px 0 #ffffff"></div>
<span class="t c" style="left:371px;width:300px;top:438.4px;color:#000;font-size:12px;transform:scaleX(0.885);transform-origin:50% 50%;">Snooper...</span>
<div style="left:465px;top:466.2px;width:112.2px;height:22.6px;background:#ece9d8;border:1px solid;border-color:#a19e8e #7a7869 #7a7869 #a19e8e;box-sizing:border-box;box-shadow:inset 1px 1px 0 #ffffff"></div>
<span class="t c" style="left:371px;width:300px;top:469.9px;color:#000;font-size:12px;transform:scaleX(0.885);transform-origin:50% 50%;">Reset Configuration</span>
<div style="left:465px;top:498px;width:112.2px;height:22.6px;background:#ece9d8;border:1px solid;border-color:#a19e8e #7a7869 #7a7869 #a19e8e;box-sizing:border-box;box-shadow:inset 1px 1px 0 #ffffff"></div>
<span class="t c" style="left:371px;width:300px;top:501.7px;color:#000;font-size:12px;transform:scaleX(0.885);transform-origin:50% 50%;">Advanced Mode</span>
<div style="left:464px;top:213px;width:114px;height:24px;border:3px solid #ff8c1a;border-radius:4px;box-sizing:border-box;box-shadow:1.5px 2.5px 2.5px rgba(0,0,0,.4);z-index:5"></div>
<div style="left:144.4px;top:716.3px;width:109.0px;height:18.2px;background:#ece9d8;box-shadow:inset 1px 1px 0 #b4b1a2, inset -1px -1px 0 #fbfaf4"></div>
<span class="t" style="left:147.8px;top:718.3px;color:#000;font-size:12px;transform:scaleX(0.885);transform-origin:0 50%;">enabled</span>
<div style="left:256.2px;top:716.3px;width:109.0px;height:18.2px;background:#ece9d8;box-shadow:inset 1px 1px 0 #b4b1a2, inset -1px -1px 0 #fbfaf4"></div>
<span class="t" style="left:259.59999999999997px;top:718.3px;color:#000;font-size:12px;transform:scaleX(0.885);transform-origin:0 50%;">running</span>
<div style="left:368.1px;top:716.3px;width:109.0px;height:18.2px;background:#ece9d8;box-shadow:inset 1px 1px 0 #b4b1a2, inset -1px -1px 0 #fbfaf4"></div>
<span class="t" style="left:371.5px;top:718.3px;color:#aca899;font-size:12px;transform:scaleX(0.885);transform-origin:0 50%;">slave</span>
<div style="left:479.9px;top:716.3px;width:100.10000000000002px;height:18.2px;background:#ece9d8;box-shadow:inset 1px 1px 0 #b4b1a2, inset -1px -1px 0 #fbfaf4"></div>
<span class="t" style="left:483.29999999999995px;top:718.3px;color:#000;font-size:12px;transform:scaleX(0.885);transform-origin:0 50%;">running ap</span>
</div></body></html>
